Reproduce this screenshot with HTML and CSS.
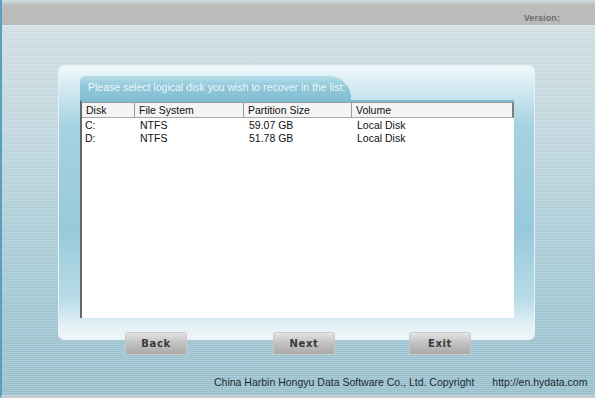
FILE: index.html
```html
<!DOCTYPE html>
<html>
<head>
<meta charset="utf-8">
<link rel="stylesheet" href="styles.css">
</head>
<body>
<div class="app">
  <div class="topbar"><span class="version">Version:</span></div>
  <div class="main">
    <div class="panel">
      <div class="tab">Please select logical disk you wish to recover in the list:</div>
      <div class="list">
        <div class="row head">
          <div class="c c1">Disk</div>
          <div class="c c2">File System</div>
          <div class="c c3">Partition Size</div>
          <div class="c c4">Volume</div>
        </div>
        <div class="row">
          <div class="c c1">C:</div>
          <div class="c c2">NTFS</div>
          <div class="c c3">59.07 GB</div>
          <div class="c c4">Local Disk</div>
        </div>
        <div class="row">
          <div class="c c1">D:</div>
          <div class="c c2">NTFS</div>
          <div class="c c3">51.78 GB</div>
          <div class="c c4">Local Disk</div>
        </div>
      </div>
    </div>
    <div class="buttons">
      <button class="btn b-back">Back</button>
      <button class="btn b-next">Next</button>
      <button class="btn b-exit">Exit</button>
    </div>
    <div class="footer">
      <span class="copy">China Harbin Hongyu Data Software Co., Ltd. Copyright</span>
      <span class="url">http://en.hydata.com</span>
    </div>
  </div>
</div>
</body>
</html>
```
FILE: styles.css
```css
* { box-sizing: border-box; }
html, body { margin: 0; padding: 0; }
body {
  width: 595px;
  height: 398px;
  overflow: hidden;
  font-family: "Liberation Sans", Arial, sans-serif;
  background: #9ec3cf;
}
.app {
  width: 595px;
  height: 398px;
  display: flex;
  flex-direction: column;
  border-left: 2px solid #5a9ec0;
  border-bottom: 3px solid #c4ced2;
}
.topbar {
  height: 25px;
  flex: none;
  background: linear-gradient(#cbd3d3, #bdbdbb 20%, #bababa);
  border-top: 1px solid #c9e0e2;
  display: flex;
  justify-content: flex-end;
  align-items: flex-end;
  padding: 0 35px 2px 0;
}
.version {
  font-size: 9px;
  font-weight: bold;
  color: #6d6d6d;
  letter-spacing: 0.1px;
}
.main {
  flex: 1;
  display: flex;
  flex-direction: column;
  background:
    repeating-linear-gradient(180deg, rgba(255,255,255,0.10) 0 1px, rgba(0,0,0,0.03) 1px 2px),
    linear-gradient(180deg, #d4e2e6 0%, #c4dbe2 30%, #a9cdd9 70%, #9ec5d2 100%);
  border-top: 1px solid #d8e6ea;
}
.panel {
  margin: 39px 0 0 56px;
  width: 477px;
  height: 275px;
  border-radius: 6px;
  border: 1px solid #e6f2f6;
  background:
    linear-gradient(180deg, #eef7fa 0%, #d3eaf2 8%, #a6d2e1 22%, #98c9db 60%, #b7dbe7 85%, #e6f2f6 96%, #eef6f9 100%);
  padding: 10px 20px 0 21px;
  display: flex;
  flex-direction: column;
}
.tab {
  width: 271px;
  height: 24px;
  background: linear-gradient(180deg, #b6dde9 0%, #8fc7d9 45%, #83bfd3 100%);
  border-radius: 5px 22px 0 0;
  color: #eef7fa;
  font-size: 10.5px;
  padding: 5px 0 0 8px;
  white-space: nowrap;
}
.list {
  height: 218px;
  background: #fff;
  border-top: 2px solid #7dbcd1;
  border-left: 2px solid #5d6a70;
  display: flex;
  flex-direction: column;
  font-size: 10.5px;
  color: #111;
}
.row {
  display: flex;
  height: 13px;
  line-height: 13px;
}
.row.head {
  height: 16px;
  line-height: 14px;
  background: #f4f4f4;
  border: 1px solid #9a9a9a;
  border-left: none;
  border-right: 2px solid #7e7e7e;
  border-bottom: 1px solid #a8a8a8;
  margin-bottom: 1px;
}
.c { padding-left: 3px; white-space: nowrap; }
.c1 { width: 53px; }
.c2 { width: 109px; }
.c3 { width: 108px; }
.c4 { flex: 1; }
.row.head .c1, .row.head .c2, .row.head .c3 { border-right: 1px solid #9a9a9a; }
.row.head .c { padding-left: 4px; }
.row:not(.head) .c2, .row:not(.head) .c3, .row:not(.head) .c4 { padding-left: 5px; }
.buttons {
  margin-top: -7px;
  display: flex;
  padding-left: 124px;
}
.btn {
  width: 60px;
  height: 21px;
  border: none;
  border-radius: 2px;
  background: linear-gradient(180deg, #e4e4e4 0%, #c6c6c6 40%, #a9a9a9 100%);
  box-shadow: 0 0 0 1px #c9c9c9;
  font-family: "DejaVu Sans", Verdana, sans-serif;
  font-weight: bold;
  font-size: 10px;
  color: #3a3a3a;
  letter-spacing: 0.6px;
  padding: 0;
}
.b-next { margin-left: 88px; }
.b-exit { margin-left: 76px; }
.footer {
  margin-top: 22px;
  display: flex;
  padding-left: 212px;
  font-size: 10.5px;
  color: #1b2a33;
  white-space: nowrap;
}
.url { margin-left: 18px; }
```
